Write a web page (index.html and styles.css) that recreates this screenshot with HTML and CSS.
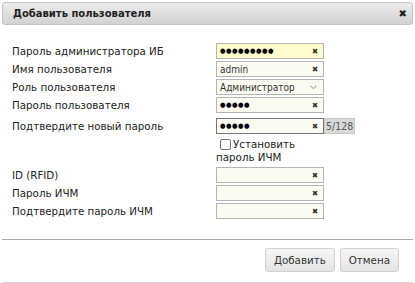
FILE: index.html
```html
<!DOCTYPE html>
<html lang="ru">
<head>
    <meta charset="UTF-8">
    <title>Добавить пользователя</title>
    <link rel="stylesheet" href="styles.css">
</head>
<body>
    <div class="dialog">
        <div class="titlebar">
            <span class="title">Добавить пользователя</span>
            <span class="close">✖</span>
        </div>
        <div class="form">
            <div class="row">
                <label>Пароль администратора ИБ</label>
                <div class="field auto"><span class="dots">●●●●●●●●●</span><span class="clear">✖</span></div>
            </div>
            <div class="row">
                <label>Имя пользователя</label>
                <div class="field"><span class="val">admin</span><span class="clear">✖</span></div>
            </div>
            <div class="row">
                <label>Роль пользователя</label>
                <div class="field"><span class="val">Администратор</span><span class="arrow">
                    <svg width="7" height="5" viewBox="0 0 7 5"><path d="M0.5 0.8 L3.5 3.8 L6.5 0.8" fill="none" stroke="#888" stroke-width="1"/></svg>
                </span></div>
            </div>
            <div class="row">
                <label>Пароль пользователя</label>
                <div class="field"><span class="dots">●●●●●</span><span class="clear">✖</span></div>
            </div>
            <div class="row row-gap">
                <label>Подтвердите новый пароль</label>
                <div class="field-wrap">
                    <div class="field focus"><span class="dots">●●●●●</span><span class="clear">✖</span></div>
                    <span class="counter">5/128</span>
                </div>
            </div>
            <div class="row check-row">
                <label></label>
                <div class="check">
                    <div class="check-line"><span class="box"></span>Установить</div>
                    <div>пароль ИЧМ</div>
                </div>
            </div>
            <div class="row">
                <label>ID (RFID)</label>
                <div class="field"><span class="val"></span><span class="clear">✖</span></div>
            </div>
            <div class="row">
                <label>Пароль ИЧМ</label>
                <div class="field"><span class="val"></span><span class="clear">✖</span></div>
            </div>
            <div class="row">
                <label>Подтвердите пароль ИЧМ</label>
                <div class="field"><span class="val"></span><span class="clear">✖</span></div>
            </div>
        </div>
        <div class="buttons">
            <button class="btn">Добавить</button>
            <button class="btn">Отмена</button>
        </div>
    </div>
</body>
</html>
```

FILE: styles.css
```css
body {
    margin: 0;
    background-color: #fff;
    font-family: "DejaVu Sans", Verdana, sans-serif;
    font-size: 10.3px;
    color: #222;
}
.dialog {
    width: 411px;
    height: 280px;
    margin-left: 2px;
    border-bottom: 1px solid #d4d4d4;
}
.titlebar {
    display: flex;
    align-items: center;
    justify-content: space-between;
    height: 21px;
    margin-top: 2px;
    padding: 0 5px 0 10px;
    background: linear-gradient(#ececec, #d2d2d2);
    border: 1px solid #c4c4c4;
    border-radius: 3px;
}
.title {
    font-weight: bold;
    font-size: 10px;
    color: #222;
}
.close {
    font-size: 10px;
    color: #222;
}
.form {
    display: flex;
    flex-direction: column;
    gap: 2px;
    padding: 18px 0 0 10px;
    height: 196px;
    border-bottom: 1px solid #aaa;
}
.row {
    display: flex;
    align-items: center;
    height: 16px;
}
.row-gap {
    margin-top: 3px;
}
.row label {
    width: 204px;
    color: #222;
}
.field {
    display: flex;
    align-items: center;
    justify-content: space-between;
    box-sizing: border-box;
    width: 108px;
    height: 16px;
    padding: 0 5px 0 3px;
    border: 1px solid #b4b4b4;
    background-color: #fcfbf2;
    font-family: "DejaVu Sans Condensed", "DejaVu Sans", sans-serif;
    font-size: 10px;
}
.field.auto {
    background-color: #fffbcc;
}
.field.focus {
    border-color: #777;
}
.dots {
    font-size: 7px;
    letter-spacing: 0.5px;
    color: #000;
}
.val {
    color: #333;
}
.clear {
    font-size: 8px;
    color: #333;
}
.arrow {
    display: flex;
    padding-right: 1px;
}
.field-wrap {
    display: flex;
    align-items: center;
}
.counter {
    box-sizing: border-box;
    height: 16px;
    padding: 0 1px;
    line-height: 14px;
    background-color: #d9d9d9;
    border: 1px solid #c8c8c8;
    color: #555;
    font-family: "DejaVu Sans Condensed", "DejaVu Sans", sans-serif;
    font-size: 10.5px;
}
.check-row {
    height: 28px;
    margin-top: 1px;
}
.check {
    line-height: 13px;
    color: #222;
}
.check-line {
    display: flex;
    align-items: center;
    padding-left: 4px;
}
.box {
    display: inline-block;
    width: 9px;
    height: 9px;
    margin-right: 2px;
    border: 1px solid #777;
    border-radius: 2px;
    background-color: #fff;
}
.buttons {
    display: flex;
    justify-content: flex-end;
    gap: 5px;
    padding: 8px 14px 0 0;
}
.btn {
    height: 24px;
    padding: 0 8px;
    font-family: "DejaVu Sans", Verdana, sans-serif;
    font-size: 10.3px;
    color: #333;
    background: linear-gradient(#f6f6f6, #e4e4e4);
    border: 1px solid #d0d0d0;
    border-radius: 3px;
}
```
